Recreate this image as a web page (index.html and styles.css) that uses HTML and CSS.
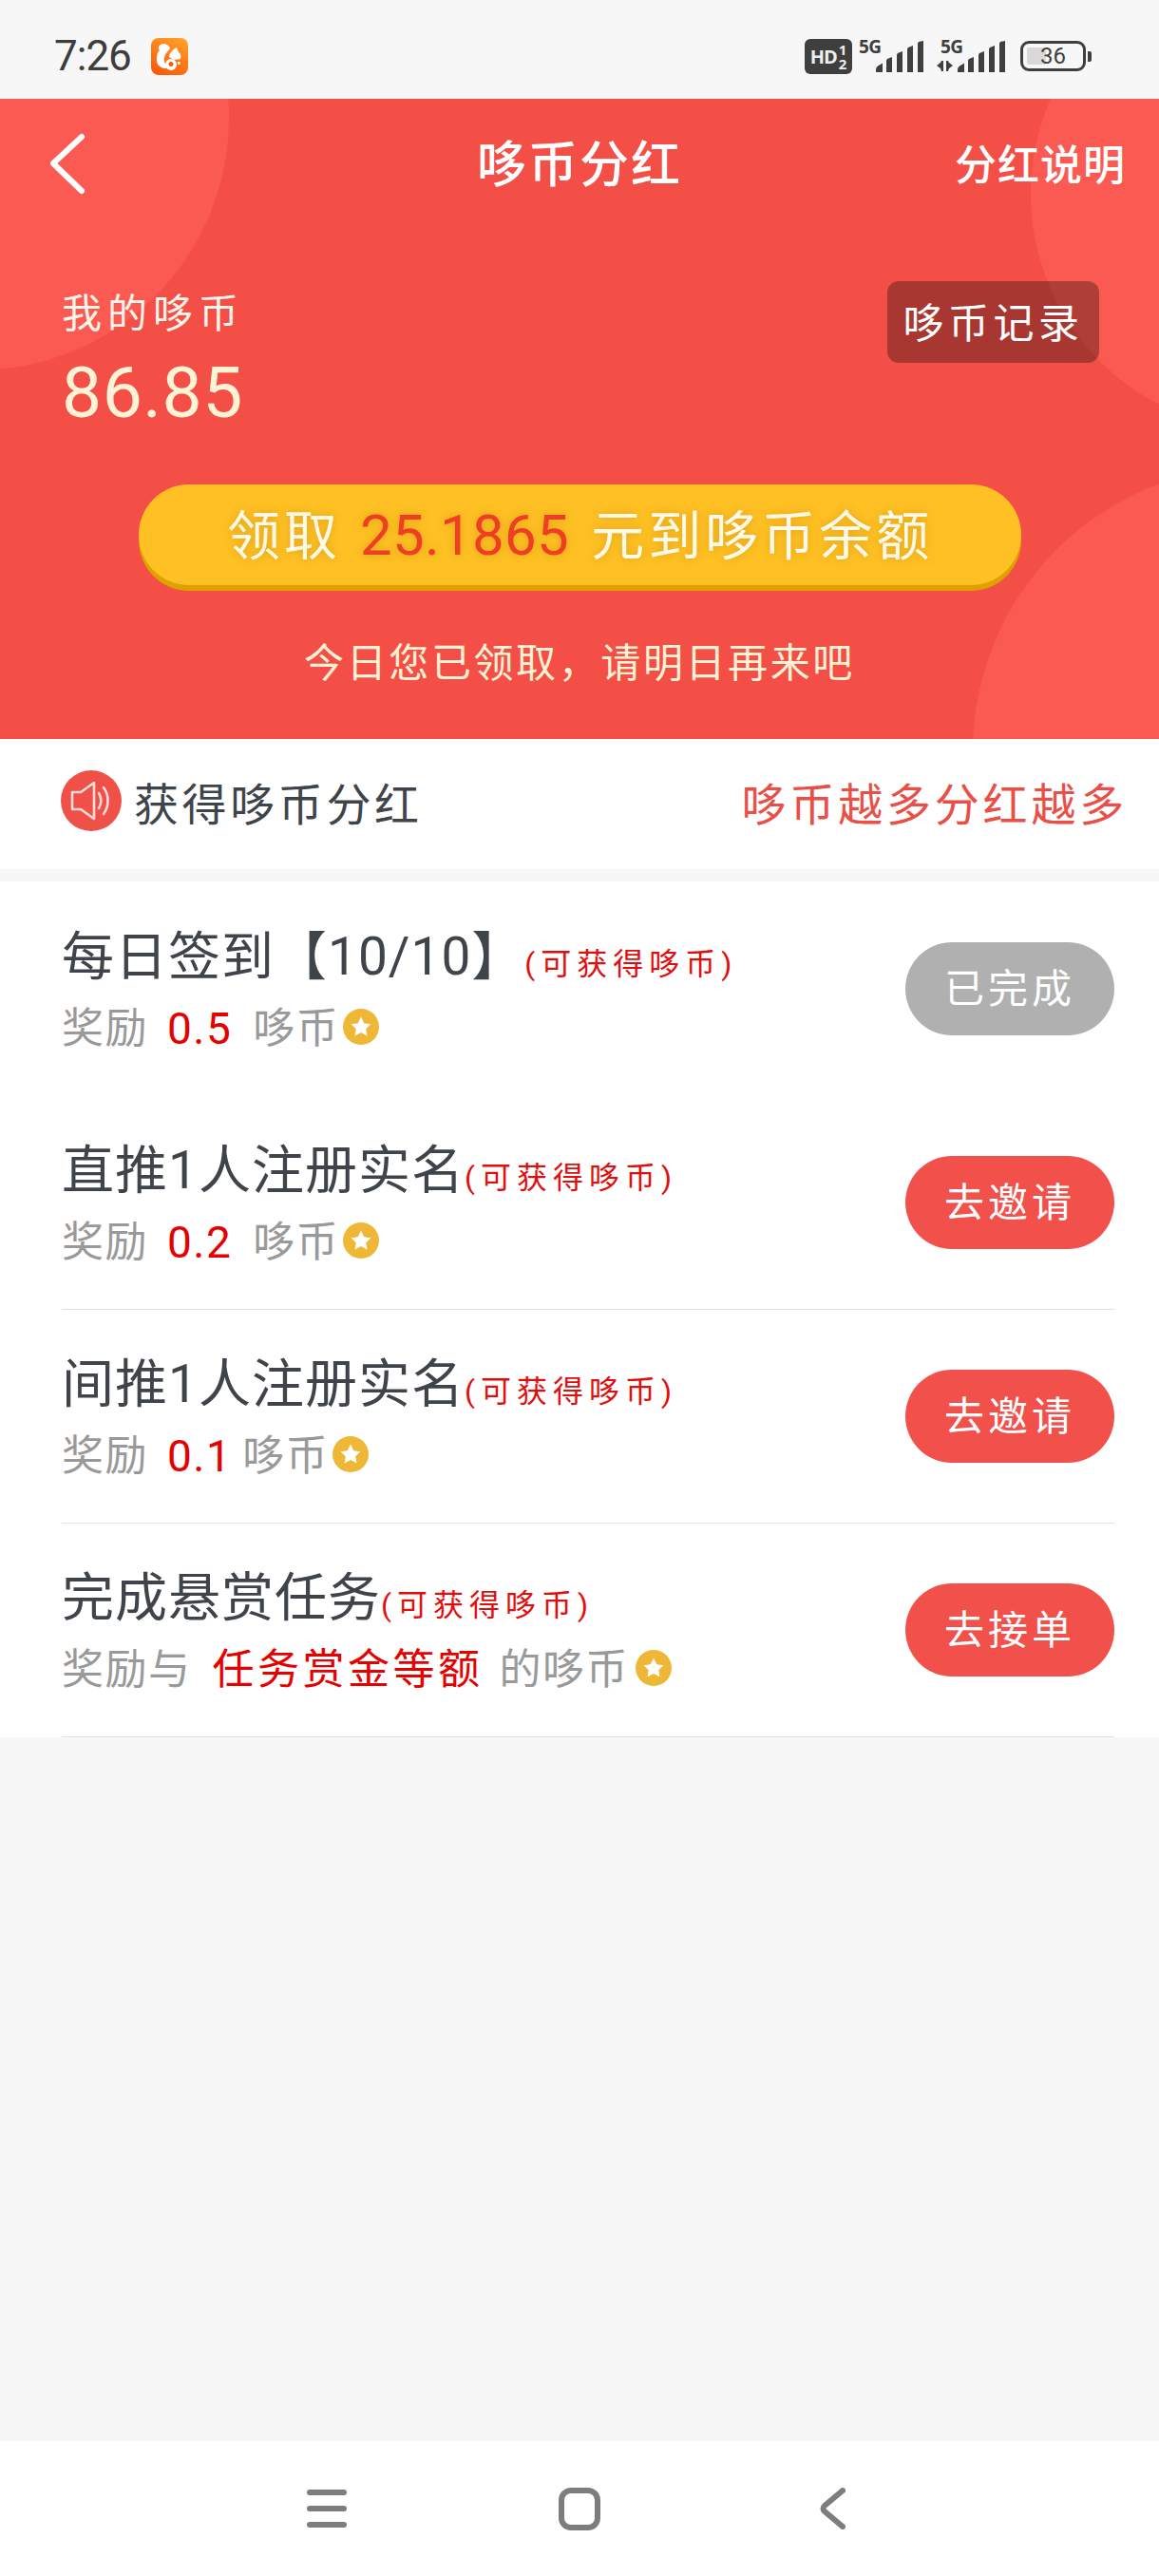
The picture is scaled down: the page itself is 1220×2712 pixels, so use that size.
FILE: index.html
```html
<!doctype html>
<html lang="zh-CN">
  <head>
    <meta charset="utf-8">
    <title>哆币分红</title>
    <link rel="stylesheet" href="styles.css">
  </head>
  <body>
    <div class="page">
      <div class="statusbar">
        <div class="status-left">
          <span class="clock">7:26</span>
          <svg class="app-icon" width="39" height="39" viewBox="0 0 39 39">
            <defs>
              <linearGradient id="appg" x1="0.8" y1="0" x2="0.3" y2="1">
                <stop offset="0" stop-color="#ffa028"/>
                <stop offset="1" stop-color="#fb5a0a"/>
              </linearGradient>
            </defs>
            <rect width="39" height="39" rx="8" fill="url(#appg)"/>
            <path d="M10 7c4-2 9 0 10 4l-4 5c-3 4-3 9 0 12l2 4h-4c-6-1-9-6-8-12 0-3 1-5 3-7-2-2-1-5 1-6z" fill="#fff"/>
            <path d="M27 10l2 5c2 1 3 4 2 7l-7 1-5-3c0-4 4-8 8-10z" fill="#fff"/>
            <circle cx="21" cy="28" r="6" fill="#fff"/>
            <circle cx="21" cy="27.500" r="2.500" fill="#fb5a0a"/>
            <rect x="28" y="25" width="2.500" height="3" fill="#fff"/>
          </svg>
        </div>
        <div class="status-right">
          <div class="hd-badge">
            <span class="hd-text">HD</span>
            <span class="hd-nums"><i>1</i><i>2</i></span>
          </div>
          <div class="signal">
            <span class="net">5G</span>
            <svg width="50" height="33" viewBox="0 0 50 33">
              <path d="M0 33v-3q0-2 2-3.500l5-3V33z M11 33V21q0-1 1-2l5-2v16z M22 33V15q0-1 1-2l5-2v22z M33 33V9q0-1 1-2l5-2v28z M44 33V3q0-1 1-2l5-1v33z" fill="#3f3f3f"/>
            </svg>
          </div>
          <div class="signal signal-data">
            <span class="net">5G</span>
            <svg class="arrows" width="17" height="11" viewBox="0 0 17 11">
              <path d="M0 5l4-3 1-2h2v11H5l-1-3z M10 0h2l1 2 4 3-4 3-1 3h-2z" fill="#3f3f3f"/>
            </svg>
            <svg width="50" height="33" viewBox="0 0 50 33">
              <path d="M0 33v-3q0-2 2-3.500l5-3V33z M11 33V21q0-1 1-2l5-2v16z M22 33V15q0-1 1-2l5-2v22z M33 33V9q0-1 1-2l5-2v28z M44 33V3q0-1 1-2l5-1v33z" fill="#3f3f3f"/>
            </svg>
          </div>
          <div class="battery">
            <div class="battery-body">
              <div class="battery-fill"></div>
              <span class="battery-num">36</span>
            </div>
            <div class="battery-cap"></div>
          </div>
        </div>
      </div>

      <div class="hero">
        <div class="blob blob-tl"></div>
        <div class="blob blob-tr"></div>
        <div class="blob blob-br"></div>

        <div class="navbar">
          <svg class="back" width="42" height="70" viewBox="0 0 42 70">
            <path d="M36 6L6 34l30 29" fill="none" stroke="#fff" stroke-width="6" stroke-linecap="round" stroke-linejoin="round"/>
          </svg>
          <h1 class="nav-title">哆币分红</h1>
          <span class="nav-link">分红说明</span>
        </div>

        <div class="balance">
          <div class="balance-info">
            <div class="balance-label">我的哆币</div>
            <div class="balance-num">86.85</div>
          </div>
          <div class="record-btn">哆币记录</div>
        </div>

        <div class="claim-wrap">
          <div class="claim-btn">领取<span class="claim-amount">25.1865</span>元到哆币余额</div>
        </div>
        <p class="claim-note">今日您已领取，请明日再来吧</p>
      </div>

      <div class="notice">
        <div class="notice-left">
          <svg class="speaker" width="64" height="64" viewBox="0 0 64 64">
            <circle cx="32" cy="32" r="32" fill="#ef5148"/>
            <path d="M12 23h9l14-10v38L21 41h-9z" fill="none" stroke="#fbdcd8" stroke-width="2.600" stroke-linejoin="round"/>
            <path d="M40 24c3 5 3 11 0 16" fill="none" stroke="#fbdcd8" stroke-width="2.600" stroke-linecap="round"/>
            <path d="M45 18c6 8 6 20 0 28" fill="none" stroke="#fbdcd8" stroke-width="2.600" stroke-linecap="round"/>
          </svg>
          <span class="notice-text">获得哆币分红</span>
        </div>
        <span class="notice-right">哆币越多分红越多</span>
      </div>

      <div class="tasks">
        <div class="task task-first">
          <div class="task-info">
            <div class="task-title">每日签到【10/10】<small>(可获得哆币)</small></div>
            <div class="task-reward">奖励<b>0.5</b>哆币<svg class="coin" width="38" height="38" viewBox="0 0 40 40"><circle cx="20" cy="20" r="20" fill="#eeb836"/><path d="M20 9l3.400 7 7.600 1-5.500 5.300 1.300 7.700-6.800-3.700-6.800 3.700 1.300-7.700L9 17l7.600-1z" fill="#fff"/></svg></div>
          </div>
          <div class="task-btn task-btn-done">已完成</div>
        </div>
        <div class="task">
          <div class="task-info">
            <div class="task-title">直推1人注册实名<small>(可获得哆币)</small></div>
            <div class="task-reward">奖励<b>0.2</b>哆币<svg class="coin" width="38" height="38" viewBox="0 0 40 40"><circle cx="20" cy="20" r="20" fill="#eeb836"/><path d="M20 9l3.400 7 7.600 1-5.500 5.300 1.300 7.700-6.800-3.700-6.800 3.700 1.300-7.700L9 17l7.600-1z" fill="#fff"/></svg></div>
          </div>
          <div class="task-btn">去邀请</div>
        </div>
        <div class="task">
          <div class="task-info">
            <div class="task-title">间推1人注册实名<small>(可获得哆币)</small></div>
            <div class="task-reward">奖励<b class="reward-narrow">0.1</b>哆币<svg class="coin" width="38" height="38" viewBox="0 0 40 40"><circle cx="20" cy="20" r="20" fill="#eeb836"/><path d="M20 9l3.400 7 7.600 1-5.500 5.300 1.300 7.700-6.800-3.700-6.800 3.700 1.300-7.700L9 17l7.600-1z" fill="#fff"/></svg></div>
          </div>
          <div class="task-btn">去邀请</div>
        </div>
        <div class="task">
          <div class="task-info">
            <div class="task-title">完成悬赏任务<small>(可获得哆币)</small></div>
            <div class="task-reward">奖励与<b class="reward-long">任务赏金等额</b>的哆币<svg class="coin coin-far" width="38" height="38" viewBox="0 0 40 40"><circle cx="20" cy="20" r="20" fill="#eeb836"/><path d="M20 9l3.400 7 7.600 1-5.500 5.300 1.300 7.700-6.800-3.700-6.800 3.700 1.300-7.700L9 17l7.600-1z" fill="#fff"/></svg></div>
          </div>
          <div class="task-btn">去接单</div>
        </div>
      </div>

      <div class="spacer"></div>

      <div class="navkeys">
        <div class="menu-key"><span></span><span></span><span></span></div>
        <div class="home-key"></div>
        <svg width="27" height="44" viewBox="0 0 27 44">
          <path d="M24 3L5 19c-2 1.700-2 4.300 0 6l19 16" fill="none" stroke="#7d7d7d" stroke-width="6" stroke-linecap="round" stroke-linejoin="round"/>
        </svg>
      </div>
    </div>
  </body>
</html>
```

FILE: styles.css
```css
* {
  box-sizing: border-box;
}

body {
  margin: 0;
  background: #f7f7f7;
  font-family: Roboto, "Noto Sans CJK SC", sans-serif;
}

.page {
  width: 1220px;
  height: 2712px;
  display: flex;
  flex-direction: column;
  overflow: hidden;
}

/* status bar */
.statusbar {
  height: 104px;
  flex: none;
  display: flex;
  justify-content: space-between;
  align-items: flex-start;
  padding: 40px 71px 0 57px;
  background: #f7f7f7;
}

.status-left {
  display: flex;
  align-items: center;
  gap: 21px;
}

.clock {
  font-size: 44px;
  line-height: 39px;
  letter-spacing: -1px;
  color: #3d3d3d;
}

.status-right {
  display: flex;
  align-items: flex-start;
  margin-top: 1px;
  color: #3f3f3f;
}

.hd-badge {
  width: 50px;
  height: 37px;
  background: #3f3f3f;
  border-radius: 6px;
  display: flex;
  align-items: center;
  justify-content: center;
  color: #eee;
  font-family: "Open Sans", sans-serif;
  font-weight: 700;
}

.hd-text {
  font-size: 20px;
  letter-spacing: -1px;
}

.hd-nums {
  display: flex;
  flex-direction: column;
  font-size: 15px;
  line-height: 15px;
  margin-left: 2px;
}

.hd-nums i {
  font-style: normal;
}

.signal {
  position: relative;
  width: 68px;
  height: 33px;
  margin: 2px 0 0 7px;
  display: flex;
  justify-content: flex-end;
}

.net {
  position: absolute;
  left: 0;
  top: -4px;
  font-family: "Open Sans", sans-serif;
  font-size: 19px;
  line-height: 20px;
  font-weight: 700;
  letter-spacing: -0.500px;
}

.signal-data {
  width: 72px;
  margin-left: 14px;
}

.signal-data .net {
  left: 4px;
}

.signal-data .arrows {
  position: absolute;
  left: 0;
  bottom: 1px;
}

.battery {
  display: flex;
  align-items: center;
  gap: 2px;
  margin: 2px 0 0 16px;
}

.battery-body {
  position: relative;
  width: 69px;
  height: 32px;
  border: 3px solid #3f3f3f;
  border-radius: 9px;
  display: flex;
  align-items: center;
  justify-content: center;
}

.battery-fill {
  position: absolute;
  left: 4px;
  top: 4px;
  bottom: 4px;
  width: 20px;
  background: #d9d9d9;
  border-radius: 2px;
}

.battery-num {
  position: relative;
  font-size: 24px;
  line-height: 26px;
  color: #3f3f3f;
}

.battery-cap {
  width: 4px;
  height: 11px;
  background: #3f3f3f;
  border-radius: 0 2px 2px 0;
}

/* red header */
.hero {
  position: relative;
  height: 674px;
  flex: none;
  overflow: hidden;
  background: #f34f47;
  color: #fff;
}

.blob {
  position: absolute;
  border-radius: 50%;
  background: #fb5a52;
}

.blob-tl {
  left: -291px;
  top: -246px;
  width: 532px;
  height: 532px;
}

.blob-tr {
  left: 1085px;
  top: -150px;
  width: 500px;
  height: 500px;
}

.blob-br {
  left: 1024px;
  top: 387px;
  width: 600px;
  height: 600px;
}

.navbar {
  position: relative;
  height: 138px;
  display: flex;
  align-items: center;
  justify-content: space-between;
  padding: 0 35px 0 50px;
}

.back {
  flex: none;
}

.nav-title {
  position: absolute;
  left: 0;
  right: 0;
  top: 37px;
  margin: 0;
  text-align: center;
  font-size: 52px;
  line-height: 68px;
  font-weight: 500;
  letter-spacing: 2px;
}

.nav-link {
  margin-top: 4px;
  font-size: 44px;
  line-height: 60px;
  font-weight: 500;
  letter-spacing: 1px;
}

.balance {
  position: relative;
  display: flex;
  justify-content: space-between;
  align-items: flex-start;
  padding: 54px 63px 0 65px;
}

.balance-info {
  padding-top: 7px;
}

.balance-label {
  font-size: 42px;
  line-height: 56px;
  color: #fff5ea;
  letter-spacing: 6px;
}

.balance-num {
  margin-top: 12px;
  font-size: 75px;
  line-height: 84px;
  color: #fff3d6;
  letter-spacing: 0.500px;
}

.record-btn {
  width: 223px;
  height: 86px;
  background: rgba(0, 0, 0, 0.3);
  border-radius: 12px;
  text-align: center;
  font-size: 43px;
  line-height: 91px;
  letter-spacing: 4.500px;
  color: #fff;
}

.claim-wrap {
  position: relative;
  padding: 55px 145px 0 146px;
}

.claim-btn {
  height: 106px;
  background: #fec023;
  border-radius: 53px;
  box-shadow: 0 6px 0 #dfa100;
  text-align: center;
  font-size: 56px;
  line-height: 107px;
  letter-spacing: 4px;
  color: #fff9ea;
  text-shadow: 0 0 8px rgba(170, 110, 0, 0.35);
}

.claim-amount {
  margin: 0 23px 0 20px;
  font-size: 60px;
  letter-spacing: 0.300px;
  color: #ee3f24;
}

.claim-note {
  position: relative;
  margin: 54px 0 0;
  text-align: center;
  font-size: 42px;
  line-height: 58px;
  letter-spacing: 2.600px;
  color: #fff1d4;
}

/* notice row */
.notice {
  height: 137px;
  flex: none;
  display: flex;
  align-items: center;
  justify-content: space-between;
  padding: 0 33px 7px 64px;
  background: #fff;
}

.notice-left {
  display: flex;
  align-items: center;
  gap: 13px;
}

.notice-text {
  margin-top: 10px;
  font-size: 47px;
  line-height: 64px;
  letter-spacing: 3.600px;
  color: #3f444a;
}

.notice-right {
  margin-top: 10px;
  font-size: 47px;
  line-height: 64px;
  letter-spacing: 3.800px;
  color: #ea4f47;
}

/* task list */
.tasks {
  margin-top: 13px;
  padding: 0 47px 0 65px;
  background: #fff;
  flex: none;
}

.task {
  height: 225px;
  display: flex;
  align-items: center;
  justify-content: space-between;
  border-bottom: 1px solid #e2e2e2;
}

.task-first {
  height: 226px;
  border-bottom: none;
}

.task-info {
  display: flex;
  flex-direction: column;
}

.task-title {
  display: flex;
  align-items: baseline;
  font-size: 55px;
  line-height: 76px;
  color: #3f444a;
  letter-spacing: 1px;
}

.task-title small {
  font-size: 32px;
  letter-spacing: 6px;
  color: #e10e0e;
}

.task-reward {
  display: flex;
  align-items: center;
  font-size: 44px;
  line-height: 60px;
  color: #999;
  letter-spacing: 1.500px;
}

.task-reward b {
  margin: 0 22px 0 20px;
  font-weight: 400;
  font-size: 46px;
  color: #e60000;
}

.task-reward b.reward-narrow {
  margin-right: 11px;
}

.task-reward b.reward-long {
  margin: 0 17px 0 22px;
  font-size: 44px;
  letter-spacing: 3.500px;
}

.coin {
  margin: -4px 0 0 4px;
}

.coin-far {
  margin-left: 7px;
}

.task-btn {
  width: 220px;
  height: 98px;
  flex: none;
  border-radius: 49px;
  background: #f2504a;
  text-align: center;
  font-size: 42px;
  line-height: 99px;
  letter-spacing: 4px;
  color: #fff;
}

.task-btn-done {
  background: #b0b0b0;
}

.spacer {
  flex: 1;
}

/* android nav keys */
.navkeys {
  height: 142px;
  flex: none;
  display: flex;
  align-items: center;
  padding-left: 323px;
  background: #fff;
}

.menu-key {
  display: flex;
  flex-direction: column;
  gap: 11px;
  width: 42px;
}

.menu-key span {
  height: 6px;
  background: #7d7d7d;
  border-radius: 3px;
}

.home-key {
  width: 44px;
  height: 45px;
  margin: 0 231px 0 223px;
  border: 6px solid #7d7d7d;
  border-radius: 13px;
}
```
